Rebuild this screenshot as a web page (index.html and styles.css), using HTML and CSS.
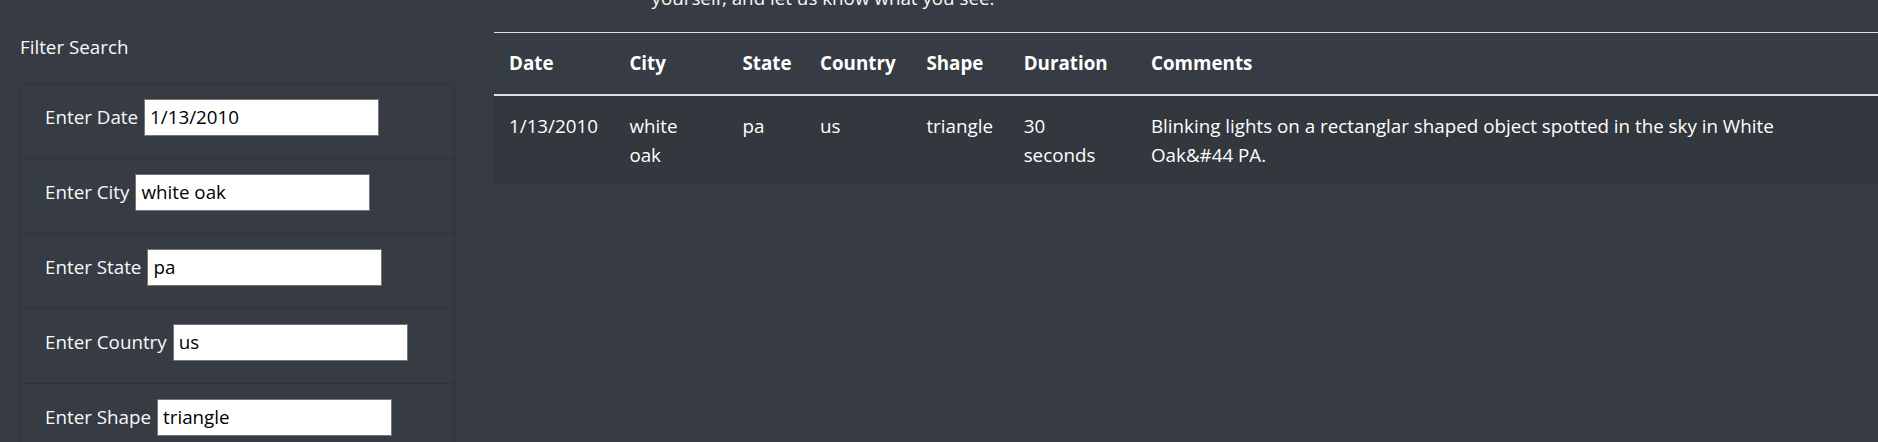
FILE: index.html
```html
<!DOCTYPE html>
<html lang="en">
<head>
<meta charset="utf-8">
<title>UFO Sightings</title>
<link rel="stylesheet" href="styles.css">
</head>
<body>
<div class="page">
  <aside class="sidebar">
    <div class="filter-title">Filter Search</div>
    <ul class="filter-card">
      <li class="filter-item"><label for="date">Enter Date</label><input id="date" class="filter-input" type="text" value="1/13/2010"></li>
      <li class="filter-item"><label for="city">Enter City</label><input id="city" class="filter-input" type="text" value="white oak"></li>
      <li class="filter-item"><label for="state">Enter State</label><input id="state" class="filter-input" type="text" value="pa"></li>
      <li class="filter-item"><label for="country">Enter Country</label><input id="country" class="filter-input" type="text" value="us"></li>
      <li class="filter-item"><label for="shape">Enter Shape</label><input id="shape" class="filter-input" type="text" value="triangle"></li>
    </ul>
  </aside>
  <main class="main">
    <p class="intro">yourself, and let us know what you see.</p>
    <table class="ufo-table">
      <colgroup>
        <col class="c-date"><col class="c-city"><col class="c-state"><col class="c-country"><col class="c-shape"><col class="c-duration"><col>
      </colgroup>
      <thead>
        <tr><th>Date</th><th>City</th><th>State</th><th>Country</th><th>Shape</th><th>Duration</th><th>Comments</th></tr>
      </thead>
      <tbody>
        <tr>
          <td>1/13/2010</td>
          <td><span class="stack">white oak</span></td>
          <td>pa</td>
          <td>us</td>
          <td>triangle</td>
          <td><span class="stack">30 seconds</span></td>
          <td><span class="comment">Blinking lights on a rectanglar shaped object spotted in the sky in White Oak&amp;#44 PA.</span></td>
        </tr>
      </tbody>
    </table>
  </main>
</div>
</body>
</html>
```

FILE: styles.css
```css
html, body {
  margin: 0;
  padding: 0;
}

body {
  background: #373b43;
  color: #f8f9fa;
  font-family: "Open Sans", "Noto Sans", sans-serif;
  font-size: 18.8px;
  line-height: 28.8px;
  overflow: hidden;
}

.page {
  display: flex;
  align-items: flex-start;
}

.sidebar {
  width: 435px;
  margin-left: 20px;
  padding-top: 33px;
  flex: none;
}

.filter-title {
  color: #f8f9fa;
}

.filter-card {
  list-style: none;
  margin: 21px 0 0;
  padding: 0;
  border: 1px solid rgba(0, 0, 0, 0.13);
  border-radius: 5px;
}

.filter-item {
  display: flex;
  align-items: baseline;
  gap: 6px;
  padding: 15px 24px 22px;
  border-top: 1px solid rgba(0, 0, 0, 0.13);
}

.filter-item:first-child {
  border-top: 0;
}

.filter-input {
  box-sizing: border-box;
  width: 235px;
  height: 37px;
  margin: 0;
  padding: 1px 5px;
  border: 1px solid #767676;
  border-radius: 0;
  background: #fff;
  color: #000;
  font-family: inherit;
  font-size: 18.8px;
}

.main {
  flex: 1;
  margin-left: 39px;
  min-width: 0;
}

.intro {
  margin: -16px 0 19.2px;
  width: 658px;
  text-align: center;
}

.ufo-table {
  width: 100%;
  border-collapse: collapse;
  table-layout: fixed;
  color: #fff;
}

.c-date { width: 120.4px; }
.c-city { width: 113px; }
.c-state { width: 77.6px; }
.c-country { width: 106.4px; }
.c-shape { width: 97.3px; }
.c-duration { width: 127.3px; }

.ufo-table th,
.ufo-table td {
  padding: 16px 15px;
  text-align: left;
  vertical-align: top;
  border-top: 1px solid #dee2e6;
}

.ufo-table th {
  font-weight: 700;
  border-bottom: 2.4px solid #dee2e6;
}

.ufo-table td {
  border-top: 0;
  background: #33373e;
}

.stack {
  display: block;
  width: min-content;
}

.comment {
  display: block;
  max-width: 670px;
}
```
